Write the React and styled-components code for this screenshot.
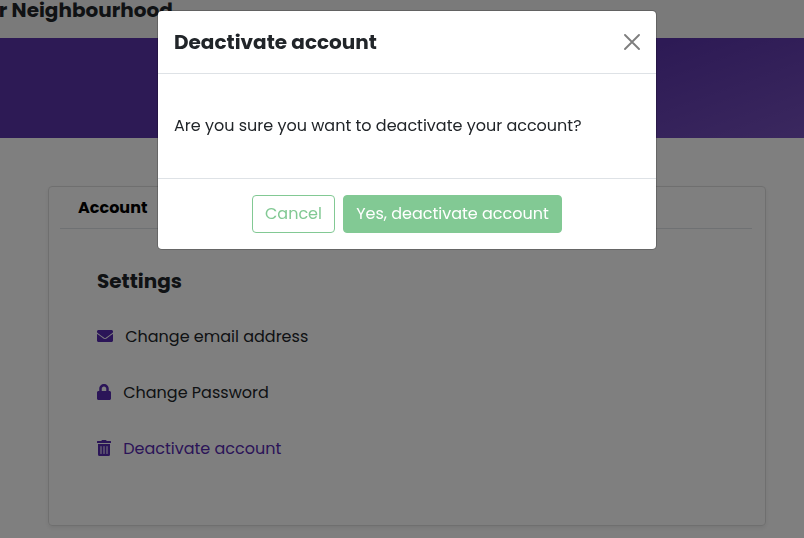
import React from 'react';
import styled, { createGlobalStyle } from 'styled-components';

const Global = createGlobalStyle`
  *, *::before, *::after { box-sizing: border-box; }
  html, body { margin: 0; height: 100%; overflow: hidden; }
  body {
    font: 400 16px/24px Poppins, Inter, sans-serif;
    color: #212529;
    background: #fff;
  }
  h1, h2, p, ul { margin: 0; padding: 0; }
`;

const Page = styled.div`
  height: 538px;
  overflow: hidden;
`;

const Header = styled.header`
  height: 38px;
  background: #f4f4f4;
`;

const Brand = styled.h1`
  font-size: 20px;
  line-height: 21px;
  font-weight: 700;
  margin-left: -1.2px;
  white-space: nowrap;
`;

const Banner = styled.div`
  height: 100px;
  background: linear-gradient(160deg, #5a34aa 62%, #7650be 100%);
`;

const Card = styled.section`
  width: 718px;
  height: 340px;
  margin: 48px 0 0 48px;
  padding: 0 13px 0 11px;
  border: 1px solid #dfdfdf;
  border-radius: 4px;
  box-shadow: 0 2px 4px rgba(0, 0, 0, 0.075);
`;

const Tabs = styled.nav`
  height: 42px;
  padding: 9px 18px 0;
  border-bottom: 1px solid #dee2e6;
`;

const Tab = styled.span`
  font-weight: 700;
  color: #000;
`;

const Settings = styled.div`
  padding: 40px 37px 0;
`;

const Heading = styled.h2`
  font-size: 20px;
  line-height: 24px;
  font-weight: 700;
`;

const List = styled.ul`
  display: flex;
  flex-direction: column;
  gap: 32px;
  margin-top: 31px;
  list-style: none;
`;

const Item = styled.li`
  display: flex;
  align-items: center;
  gap: 12.2px;
  height: 24px;
  color: ${(p) => (p.$active ? '#562ab0' : '#212529')};
  svg { flex: none; fill: #562ab0; }
`;

const ItemLabel = styled.span`
  padding-top: 2px;
`;

const Backdrop = styled.div`
  position: fixed;
  inset: 0;
  display: flex;
  justify-content: center;
  align-items: flex-start;
  padding: 10px 0 0 10px;
  background: rgba(0, 0, 0, 0.5);
`;

const Dialog = styled.div`
  width: 500px;
  height: 240px;
  border: 1px solid rgba(0, 0, 0, 0.2);
  border-radius: 4.8px;
  background: #fff;
  background-clip: padding-box;
`;

const DialogHeader = styled.div`
  display: flex;
  align-items: center;
  justify-content: space-between;
  height: 63px;
  padding: 0 16px;
  border-bottom: 1px solid #dee2e6;
`;

const CloseButton = styled.button`
  display: flex;
  padding: 0;
  border: 0;
  background: none;
  opacity: 0.5;
`;

const DialogBody = styled.div`
  display: flex;
  align-items: center;
  height: 104px;
  padding: 0 16px;
`;

const DialogFooter = styled.div`
  display: flex;
  justify-content: center;
  gap: 8px;
  height: 71px;
  padding: 16px 0;
  border-top: 1px solid #dee2e6;
`;

const Button = styled.button`
  display: flex;
  align-items: center;
  justify-content: center;
  width: ${(p) => p.$width}px;
  height: 38px;
  padding: 0;
  border: 1px solid #82c994;
  border-radius: 4px;
  background: ${(p) => (p.$solid ? '#82c994' : '#fff')};
  color: ${(p) => (p.$solid ? '#fff' : '#82c994')};
  font: inherit;
`;

const Mail = () => (
  <svg width="16" height="16" viewBox="0 0 512 512">
    <path d="M502.3 190.8c3.9-3.1 9.7-.2 9.7 4.7V400c0 26.5-21.5 48-48 48H48c-26.5 0-48-21.5-48-48V195.6c0-5 5.7-7.8 9.7-4.7 22.4 17.4 52.1 39.5 154.1 113.6 21.1 15.4 56.7 47.8 92.2 47.6 35.7.3 72-32.8 92.3-47.6 102-74.1 131.6-96.3 154-113.7zM256 320c23.2.4 56.6-29.2 73.4-41.4 132.7-96.3 142.8-104.7 173.4-128.7 5.8-4.5 9.2-11.5 9.2-18.9v-19c0-26.5-21.5-48-48-48H48c-26.5 0-48 21.5-48 48v19c0 7.4 3.4 14.3 9.2 18.9 30.6 23.9 40.7 32.4 173.4 128.7 16.8 12.2 50.2 41.8 73.4 41.4z" />
  </svg>
);

const Lock = () => (
  <svg width="14" height="16" viewBox="0 0 448 512">
    <path d="M400 224h-24v-72C376 68.2 307.8 0 224 0S72 68.2 72 152v72H48c-26.5 0-48 21.5-48 48v192c0 26.5 21.5 48 48 48h352c26.5 0 48-21.5 48-48V272c0-26.5-21.5-48-48-48zm-104 0H152v-72c0-39.7 32.3-72 72-72s72 32.3 72 72v72z" />
  </svg>
);

const Trash = () => (
  <svg width="14" height="16" viewBox="0 0 448 512">
    <path d="M32 464a48 48 0 0 0 48 48h288a48 48 0 0 0 48-48V128H32zm272-256a16 16 0 0 1 32 0v224a16 16 0 0 1-32 0zm-96 0a16 16 0 0 1 32 0v224a16 16 0 0 1-32 0zm-96 0a16 16 0 0 1 32 0v224a16 16 0 0 1-32 0zM432 32H312l-9.4-18.7A24 24 0 0 0 281.1 0H166.8a23.72 23.72 0 0 0-21.4 13.3L136 32H16A16 16 0 0 0 0 48v32a16 16 0 0 0 16 16h416a16 16 0 0 0 16-16V48a16 16 0 0 0-16-16z" />
  </svg>
);

const Close = () => (
  <svg width="16" height="16" viewBox="0 0 16 16">
    <path d="M1 1l14 14M15 1L1 15" stroke="#000" strokeWidth="1.9" strokeLinecap="round" />
  </svg>
);

export default function App() {
  return (
    <>
      <Global />
      <Page>
        <Header>
          <Brand>r Neighbourhood</Brand>
        </Header>
        <Banner />
        <Card>
          <Tabs><Tab>Account</Tab></Tabs>
          <Settings>
            <Heading>Settings</Heading>
            <List>
              <Item><Mail /><ItemLabel>Change email address</ItemLabel></Item>
              <Item><Lock /><ItemLabel>Change Password</ItemLabel></Item>
              <Item $active><Trash /><ItemLabel>Deactivate account</ItemLabel></Item>
            </List>
          </Settings>
        </Card>
      </Page>
      <Backdrop>
        <Dialog role="dialog" aria-modal="true">
          <DialogHeader>
            <Heading>Deactivate account</Heading>
            <CloseButton aria-label="Close"><Close /></CloseButton>
          </DialogHeader>
          <DialogBody>
            <p>Are you sure you want to deactivate your account?</p>
          </DialogBody>
          <DialogFooter>
            <Button $width={83}>Cancel</Button>
            <Button $width={219} $solid>Yes, deactivate account</Button>
          </DialogFooter>
        </Dialog>
      </Backdrop>
    </>
  );
}
